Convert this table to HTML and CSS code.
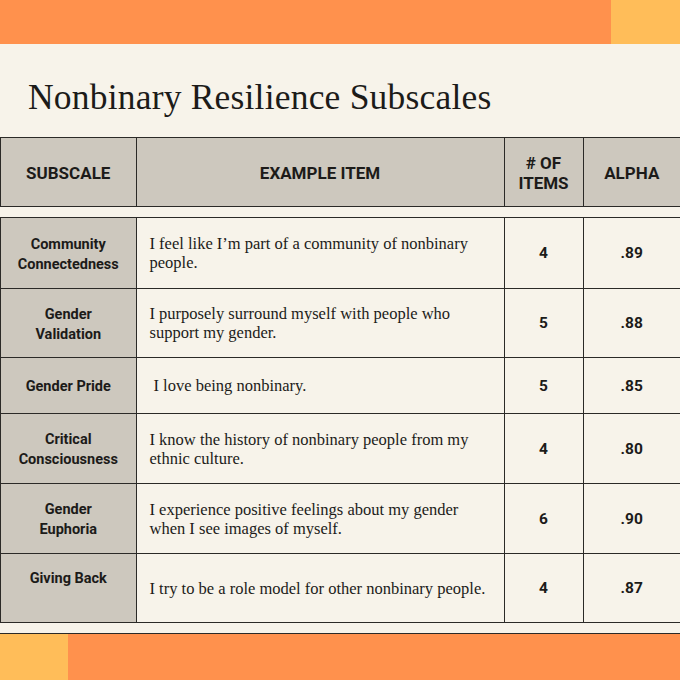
FILE: index.html
```html
<!DOCTYPE html>
<html>
<head>
<meta charset="utf-8">
<link rel="stylesheet" href="styles.css">
</head>
<body>
<div class="page">
  <div class="bar top"><div class="orange"></div><div class="yellow"></div></div>
  <h1 class="title">Nonbinary Resilience Subscales</h1>
  <div class="grid head">
    <div class="cell">SUBSCALE</div>
    <div class="cell">EXAMPLE ITEM</div>
    <div class="cell">#&nbsp;OF<br>ITEMS</div>
    <div class="cell">ALPHA</div>
  </div>
  <div class="grid body">
    <div class="cell label r1">Community<br>Connectedness</div>
    <div class="cell item r1">I feel like I’m part of a community of nonbinary people.</div>
    <div class="cell num r1">4</div>
    <div class="cell num r1">.89</div>

    <div class="cell label r2">Gender<br>Validation</div>
    <div class="cell item r2">I purposely surround myself with people who support my gender.</div>
    <div class="cell num r2">5</div>
    <div class="cell num r2">.88</div>

    <div class="cell label r3">Gender Pride</div>
    <div class="cell item r3 indent">I love being nonbinary.</div>
    <div class="cell num r3">5</div>
    <div class="cell num r3">.85</div>

    <div class="cell label r4">Critical<br>Consciousness</div>
    <div class="cell item r4">I know the history of nonbinary people from my ethnic culture.</div>
    <div class="cell num r4">4</div>
    <div class="cell num r4">.80</div>

    <div class="cell label r5">Gender<br>Euphoria</div>
    <div class="cell item r5">I experience positive feelings about my gender when I see images of myself.</div>
    <div class="cell num r5">6</div>
    <div class="cell num r5">.90</div>

    <div class="cell label r6 top-align">Giving Back</div>
    <div class="cell item r6">I try to be a role model for other nonbinary people.</div>
    <div class="cell num r6">4</div>
    <div class="cell num r6">.87</div>
  </div>
  <div class="bar bottom"><div class="yellow"></div><div class="orange"></div></div>
</div>
</body>
</html>
```

FILE: styles.css
```css
html, body {
  margin: 0;
  padding: 0;
  background: #f7f3ea;
}
body {
  width: 680px;
  height: 680px;
  overflow: hidden;
  color: #1c1b19;
}
.page {
  width: 680px;
  height: 680px;
  display: flex;
  flex-direction: column;
}
.bar {
  display: flex;
}
.bar.top {
  height: 44px;
}
.bar.top .orange {
  width: 611px;
  background: #ff914d;
}
.bar.top .yellow {
  flex: 1;
  background: #ffbd59;
}
.bar.bottom {
  margin-top: 10px;
  flex: 1;
  border-top: 1.5px solid #2b2a27;
}
.bar.bottom .yellow {
  width: 68px;
  background: #ffbd59;
}
.bar.bottom .orange {
  flex: 1;
  background: #ff914d;
}
.title {
  margin: 33px 0 20px 28px;
  font-family: "Liberation Serif", serif;
  font-weight: normal;
  font-size: 35.5px;
  line-height: 40px;
  color: #1c1b19;
  letter-spacing: 0.2px;
}
.grid {
  width: 682px;
  display: grid;
  grid-template-columns: 135.5px 368px 79px 97.5px;
  border-top: 1.5px solid #2b2a27;
  border-left: 1.5px solid #2b2a27;
  box-sizing: border-box;
}
.cell {
  box-sizing: border-box;
  border-right: 1.5px solid #2b2a27;
  border-bottom: 1.5px solid #2b2a27;
  display: flex;
  align-items: center;
  justify-content: center;
  text-align: center;
}
.head .cell {
  background: #cdc8be;
  height: 68.5px;
  font-family: Roboto, "Liberation Sans", sans-serif;
  font-weight: bold;
  font-size: 17px;
  line-height: 20px;
  padding-top: 2px;
}
.body {
  margin-top: 10.5px;
}
.label {
  background: #cdc8be;
  font-family: Roboto, "Liberation Sans", sans-serif;
  font-weight: bold;
  font-size: 14.5px;
  line-height: 20px;
  padding-top: 3px;
}
.num {
  background: #f7f3ea;
  font-family: Roboto, "Liberation Sans", sans-serif;
  font-weight: bold;
  font-size: 15.5px;
}
.item {
  background: #f7f3ea;
  justify-content: flex-start;
  text-align: left;
  padding: 0 14px 0 13px;
  font-family: "Liberation Serif", serif;
  font-size: 16.5px;
  line-height: 19px;
}
.indent {
  padding-left: 17px;
}
.label.top-align {
  align-items: flex-start;
  padding-top: 15px;
}
.r1 { height: 71px; }
.r2 { height: 69px; }
.r3 { height: 56px; }
.r4 { height: 70px; }
.r5 { height: 70px; }
.r6 { height: 69px; }
```
